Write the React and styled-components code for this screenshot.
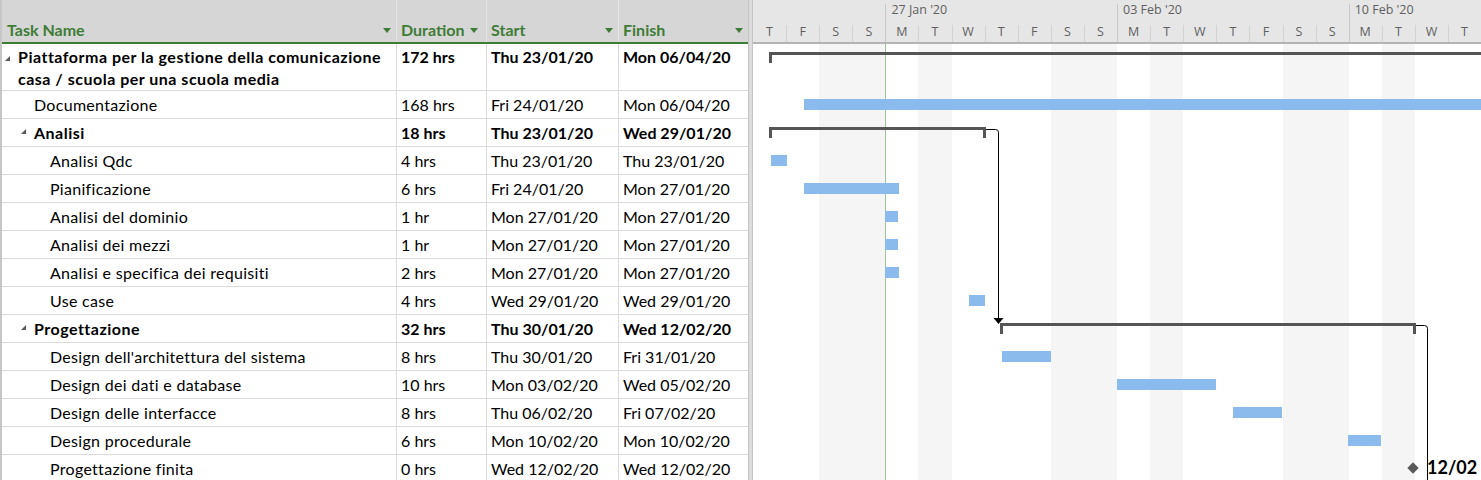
import React from 'react';
import styled, { createGlobalStyle } from 'styled-components';

const GlobalStyle = createGlobalStyle`
  html, body {
    margin: 0;
    padding: 0;
    background: #fff;
    overflow: hidden;
  }
  body {
    font-family: Lato, "Liberation Sans", sans-serif;
  }
`;

const DAY = 33.1;

const days = ['T', 'F', 'S', 'S', 'M', 'T', 'W', 'T', 'F', 'S', 'S', 'M', 'T', 'W', 'T', 'F', 'S', 'S', 'M', 'T', 'W', 'T'];
const weeks = { 4: "27 Jan '20", 11: "03 Feb '20", 18: "10 Feb '20" };
const offDays = [2, 3, 5, 9, 10, 12, 16, 17, 19];

const tasks = [
    { name: 'Piattaforma per la gestione della comunicazione casa / scuola per una scuola media', level: 0, summary: true, tall: true, dur: '172 hrs', start: 'Thu 23/01/20', finish: 'Mon 06/04/20', bar: { kind: 'summary', x: 16, w: 800, open: true } },
    { name: 'Documentazione', level: 1, dur: '168 hrs', start: 'Fri 24/01/20', finish: 'Mon 06/04/20', bar: { kind: 'task', x: 51, w: 700 } },
    { name: 'Analisi', level: 1, summary: true, dur: '18 hrs', start: 'Thu 23/01/20', finish: 'Wed 29/01/20', bar: { kind: 'summary', x: 16, w: 217 } },
    { name: 'Analisi Qdc', level: 2, dur: '4 hrs', start: 'Thu 23/01/20', finish: 'Thu 23/01/20', bar: { kind: 'task', x: 18, w: 16 } },
    { name: 'Pianificazione', level: 2, dur: '6 hrs', start: 'Fri 24/01/20', finish: 'Mon 27/01/20', bar: { kind: 'task', x: 51, w: 95 } },
    { name: 'Analisi del dominio', level: 2, dur: '1 hr', start: 'Mon 27/01/20', finish: 'Mon 27/01/20', bar: { kind: 'task', x: 132, w: 13 } },
    { name: 'Analisi dei mezzi', level: 2, dur: '1 hr', start: 'Mon 27/01/20', finish: 'Mon 27/01/20', bar: { kind: 'task', x: 132, w: 13 } },
    { name: 'Analisi e specifica dei requisiti', level: 2, dur: '2 hrs', start: 'Mon 27/01/20', finish: 'Mon 27/01/20', bar: { kind: 'task', x: 132, w: 14 } },
    { name: 'Use case', level: 2, dur: '4 hrs', start: 'Wed 29/01/20', finish: 'Wed 29/01/20', bar: { kind: 'task', x: 216, w: 16 } },
    { name: 'Progettazione', level: 1, summary: true, dur: '32 hrs', start: 'Thu 30/01/20', finish: 'Wed 12/02/20', bar: { kind: 'summary', x: 247, w: 416 } },
    { name: "Design dell'architettura del sistema", level: 2, dur: '8 hrs', start: 'Thu 30/01/20', finish: 'Fri 31/01/20', bar: { kind: 'task', x: 249, w: 49 } },
    { name: 'Design dei dati e database', level: 2, dur: '10 hrs', start: 'Mon 03/02/20', finish: 'Wed 05/02/20', bar: { kind: 'task', x: 364, w: 99 } },
    { name: 'Design delle interfacce', level: 2, dur: '8 hrs', start: 'Thu 06/02/20', finish: 'Fri 07/02/20', bar: { kind: 'task', x: 480, w: 49 } },
    { name: 'Design procedurale', level: 2, dur: '6 hrs', start: 'Mon 10/02/20', finish: 'Mon 10/02/20', bar: { kind: 'task', x: 595, w: 33 } },
    { name: 'Progettazione finita', level: 2, dur: '0 hrs', start: 'Wed 12/02/20', finish: 'Wed 12/02/20', bar: { kind: 'milestone', x: 660, label: '12/02' } },
];

const Screen = styled.div`
    display: flex;
    width: 1481px;
    height: 480px;
    overflow: hidden;
`;

/* ---------- left sheet ---------- */

const Sheet = styled.div`
    width: 748px;
    flex: none;
    border-left: 2px solid #c6c6c6;
    box-sizing: border-box;
    font-size: 16px;
    color: #000;
`;

const HeadRow = styled.div`
    display: flex;
    height: 44px;
    background: #d6d6d6;
    border-bottom: 2px solid #3d7c35;
    box-sizing: border-box;
`;

const HeadCell = styled.div`
    width: ${p => p.w}px;
    flex: none;
    box-sizing: border-box;
    display: flex;
    align-items: flex-end;
    padding: 0 5px 3px ${p => p.pl || 4}px;
    border-right: 1px solid #e4e4e4;
    color: #3d7c35;
    font-weight: 700;
    font-size: 16px;
    gap: 6px;
    &:last-child { border-right: none; }
`;

const HeadLabel = styled.span`
    flex: ${p => p.grow ? 1 : 'none'};
`;

const DropArrow = styled.span`
    width: 0;
    height: 0;
    margin-bottom: 6px;
    border-left: 4px solid transparent;
    border-right: 4px solid transparent;
    border-top: 5px solid #3d7c35;
`;

const Row = styled.div`
    display: flex;
    height: ${p => p.tall ? 47 : 28}px;
    box-sizing: border-box;
    border-bottom: 1px solid #dadada;
    font-weight: ${p => p.bold ? 700 : 400};
`;

const Cell = styled.div`
    width: ${p => p.w}px;
    flex: none;
    box-sizing: border-box;
    padding: ${p => p.tall ? '2px' : '0'} 4px 0 4px;
    display: flex;
    align-items: ${p => p.tall ? 'flex-start' : 'center'};
    border-right: 1px solid #dadada;
    line-height: 22px;
    white-space: nowrap;
    &:last-child { border-right: none; }
`;

const NameCell = styled(Cell)`
    padding-left: ${p => 3 + p.level * 16}px;
    white-space: normal;
    letter-spacing: ${p => p.bold ? 0.5 : 0.3}px;
`;

const Toggle = styled.span`
    width: 13px;
    flex: none;
    align-self: flex-start;
    height: 22px;
    position: relative;
    &::before {
        content: '';
        display: ${p => p.show ? 'block' : 'none'};
        position: absolute;
        left: 0;
        top: 10px;
        width: 0;
        height: 0;
        border-right: 5px solid #595959;
        border-top: 5px solid transparent;
    }
`;

const Splitter = styled.div`
    width: 5px;
    flex: none;
    background: #dcdcdc;
    border-left: 1px solid #c4c4c4;
    border-right: 1px solid #c4c4c4;
    box-sizing: border-box;
`;

/* ---------- gantt ---------- */

const Chart = styled.div`
    flex: 1;
    display: flex;
    flex-direction: column;
    overflow: hidden;
    font-family: "Open Sans", "Noto Sans", sans-serif;
`;

const Scale = styled.div`
    display: flex;
    height: 44px;
    flex: none;
    background: #e6e6e6;
    border-bottom: 2px solid #b4b4b4;
    box-sizing: border-box;
`;

const DayHead = styled.div`
    width: ${DAY}px;
    flex: none;
    position: relative;
    display: flex;
    flex-direction: column;
    justify-content: flex-end;
    align-items: center;
    color: #5f5f5f;
    font-size: 12.5px;
    padding-bottom: 2px;
    box-sizing: border-box;
    &::before {
        content: '';
        position: absolute;
        left: 0;
        top: ${p => p.week ? 4 : 25}px;
        bottom: 0;
        border-left: 1px solid ${p => p.week ? '#c8c8c8' : '#d2d2d2'};
        display: ${p => p.first ? 'none' : 'block'};
    }
`;

const WeekLabel = styled.span`
    position: absolute;
    left: 6px;
    top: 1px;
    white-space: nowrap;
`;

const Body = styled.div`
    position: relative;
    flex: 1;
`;

const Stripes = styled.div`
    position: absolute;
    inset: 0;
    display: flex;
`;

const Stripe = styled.div`
    width: ${DAY}px;
    flex: none;
    background: ${p => p.off ? '#f5f5f5' : '#fff'};
`;

const Today = styled.div`
    position: absolute;
    top: 0;
    bottom: 0;
    left: 132px;
    width: 1px;
    background: #9cc296;
`;

const Lane = styled.div`
    position: relative;
    height: ${p => p.tall ? 47 : 28}px;
`;

const TaskBar = styled.div`
    position: absolute;
    top: 8px;
    height: 11px;
    background: #8bbbec;
`;

const SummaryBar = styled.div`
    position: absolute;
    top: 8px;
    height: 11px;
    border-top: 3px solid #555;
    box-sizing: border-box;
    &::before, &::after {
        content: '';
        position: absolute;
        top: -3px;
        width: 3px;
        height: 11px;
        background: #555;
    }
    &::before { left: 0; }
    &::after { right: 0; display: ${p => p.open ? 'none' : 'block'}; }
`;

const Milestone = styled.div`
    position: absolute;
    top: 9px;
    width: 8px;
    height: 8px;
    margin-left: -4px;
    background: #5a5a5a;
    transform: rotate(45deg);
`;

const MilestoneLabel = styled.span`
    position: absolute;
    top: 0;
    font-weight: 700;
    font-size: 18px;
    line-height: 24px;
    font-family: Lato, "Liberation Sans", sans-serif;
    color: #000;
`;

const Links = styled.svg`
    position: absolute;
    left: 0;
    top: 0;
    overflow: visible;
`;

function Bar({ bar }) {
    if (bar.kind === 'task') return <TaskBar style={{ left: bar.x, width: bar.w }} />;
    if (bar.kind === 'summary') return <SummaryBar open={bar.open} style={{ left: bar.x, width: bar.w }} />;
    return (
        <>
            <Milestone style={{ left: bar.x }} />
            <MilestoneLabel style={{ left: bar.x + 14 }}>{bar.label}</MilestoneLabel>
        </>
    );
}

export default function App() {
    return (
        <Screen>
            <GlobalStyle />
            <Sheet>
                <HeadRow>
                    <HeadCell w={395} pl={5}><HeadLabel grow>Task Name</HeadLabel><DropArrow /></HeadCell>
                    <HeadCell w={90}><HeadLabel>Duration</HeadLabel><DropArrow /></HeadCell>
                    <HeadCell w={132}><HeadLabel grow>Start</HeadLabel><DropArrow /></HeadCell>
                    <HeadCell w={129}><HeadLabel grow>Finish</HeadLabel><DropArrow /></HeadCell>
                </HeadRow>
                {tasks.map((t, i) => (
                    <Row key={i} tall={t.tall} bold={t.summary}>
                        <NameCell w={395} level={t.level} tall={t.tall} bold={t.summary}>
                            <Toggle show={t.summary} />
                            <span>{t.name}</span>
                        </NameCell>
                        <Cell w={90} tall={t.tall}>{t.dur}</Cell>
                        <Cell w={132} tall={t.tall}>{t.start}</Cell>
                        <Cell w={129} tall={t.tall}>{t.finish}</Cell>
                    </Row>
                ))}
            </Sheet>
            <Splitter />
            <Chart>
                <Scale>
                    {days.map((d, i) => (
                        <DayHead key={i} week={!!weeks[i]} first={i === 0}>
                            {weeks[i] && <WeekLabel>{weeks[i]}</WeekLabel>}
                            <span>{d}</span>
                        </DayHead>
                    ))}
                </Scale>
                <Body>
                    <Stripes>
                        {days.map((d, i) => <Stripe key={i} off={offDays.includes(i)} />)}
                    </Stripes>
                    <Today />
                    {tasks.map((t, i) => (
                        <Lane key={i} tall={t.tall}>
                            <Bar bar={t.bar} />
                        </Lane>
                    ))}
                    <Links width="728" height="436">
                        <path d="M233 85.5 H242.5 Q245.5 85.5 245.5 88.5 V275" fill="none" stroke="#000" strokeWidth="1" />
                        <path d="M240.5 274 H250.5 L245.5 280 Z" fill="#000" />
                        <path d="M663 281.5 H671.5 Q674.5 281.5 674.5 284.5 V440" fill="none" stroke="#000" strokeWidth="1" />
                    </Links>
                </Body>
            </Chart>
        </Screen>
    );
}
